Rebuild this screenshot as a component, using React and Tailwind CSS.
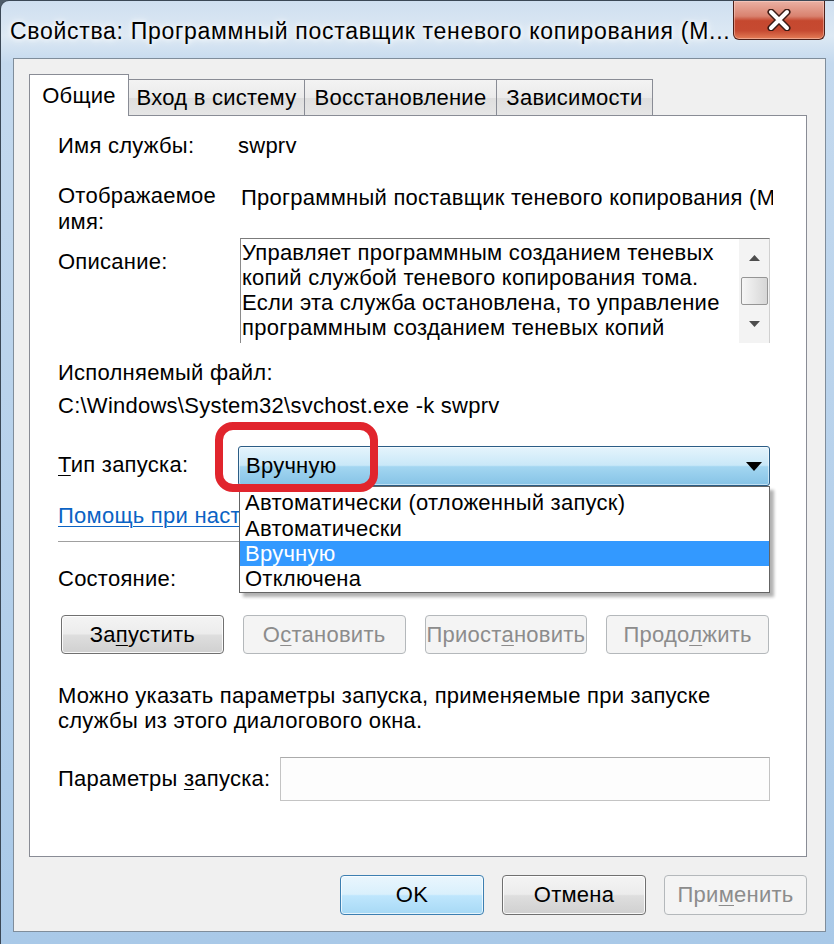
import React from 'react';

// Mnemonic underline (Alt-key letter)
function Mn({ children }) {
  return <span className="underline decoration-1 underline-offset-[3px]">{children}</span>;
}

function WinButton({ children, variant = 'normal', className = '' }) {
  const variants = {
    normal:
      'border-[#707070] bg-[linear-gradient(to_bottom,#f4f4f4_0%,#ececec_48%,#dedede_52%,#d0d0d0_100%)] text-black shadow-[inset_0_0_0_1px_rgba(255,255,255,0.85)]',
    disabled: 'border-[#b4b8bb] bg-[#f4f4f4] text-[#8c8c8c]',
    focused:
      'border-[#3c7fb1] bg-[linear-gradient(to_bottom,#eaf6fd_0%,#d9f0fc_48%,#bee6fd_52%,#a7d9f5_100%)] text-black shadow-[inset_0_0_0_1px_rgba(255,255,255,0.7)]',
  };
  return (
    <div
      className={`flex items-center justify-center rounded-[4px] border leading-[24px] ${variants[variant]} ${className}`}
    >
      <span>{children}</span>
    </div>
  );
}

function Tab({ children, active, width }) {
  if (active) {
    return (
      <div
        className={`${width} relative z-10 -mb-px flex h-[42px] items-start justify-center border border-b-0 border-[#898c95] bg-white pt-[9px] leading-[24px]`}
      >
        {children}
      </div>
    );
  }
  return (
    <div
      className={`${width} flex h-[36px] items-start justify-center border-t border-r border-[#898c95] bg-[linear-gradient(to_bottom,#f3f3f3_0%,#ebebeb_50%,#dedede_51%,#e6e6e6_100%)] pt-[6px] leading-[24px]`}
    >
      {children}
    </div>
  );
}

function CloseButton() {
  return (
    <div className="mr-[9px] ml-auto flex h-[39px] w-[92px] shrink-0 items-center justify-center rounded-b-[6px] border border-t-0 border-[#4e2019] bg-[linear-gradient(to_bottom,#eab1a4_0%,#d9826f_40%,#c5482f_52%,#c64a31_78%,#e47d57_100%)] shadow-[inset_0_0_0_1px_rgba(255,220,210,0.45)]">
      <svg width="24" height="22" viewBox="0 0 24 22">
        <path d="M4 3 L20 19 M20 3 L4 19" stroke="#3a1a14" strokeWidth="7" strokeLinecap="round" />
        <path d="M4 3 L20 19 M20 3 L4 19" stroke="#ffffff" strokeWidth="4" strokeLinecap="round" />
      </svg>
    </div>
  );
}

function ScrollArrow({ down }) {
  return (
    <svg width="11" height="6" viewBox="0 0 11 6">
      <polygon points={down ? '0,0 11,0 5.5,6' : '0,6 11,6 5.5,0'} fill="#4d4d4d" />
    </svg>
  );
}

export default function App() {
  const descLines = [
    'Управляет программным созданием теневых',
    'копий службой теневого копирования тома.',
    'Если эта служба остановлена, то управление',
    'программным созданием теневых копий',
  ];

  const startupTypes = [
    'Автоматически (отложенный запуск)',
    'Автоматически',
    'Вручную',
    'Отключена',
  ];

  return (
    <div className="h-[944px] w-[834px] overflow-hidden bg-[#4f5c69] text-[22px] tracking-[0.25px] text-black [font-family:'Liberation_Sans',Arial,sans-serif]">
      {/* Window frame (Aero glass) */}
      <div className="flex h-full flex-col rounded-tl-[9px] border-t border-l border-[#3b4856] bg-[linear-gradient(to_bottom,#cfdff0_0%,#dde9f4_35px,#c4d9ee_62px,#a9c9e8_100%)]">
        {/* Title bar */}
        <div className="flex h-[57px] shrink-0 items-start">
          <div className="pt-[17px] pl-[9px] text-[23px] leading-[26px] tracking-[0.7px] whitespace-nowrap [text-shadow:0_0_10px_#fff,0_0_5px_#fff]">
            Свойства: Программный поставщик теневого копирования (М...
          </div>
          <CloseButton />
        </div>

        {/* Client area */}
        <div className="mr-[8px] ml-[12px] flex h-[874px] shrink-0 flex-col border border-[#7f8d9b] bg-[#f0f0f0] pt-[15px] pr-[18px] pl-[15px]">
          {/* Tabs */}
          <div className="flex h-[41px] items-end">
            <Tab active width="w-[100px]">Общие</Tab>
            <Tab width="w-[176px]">Вход в систему</Tab>
            <Tab width="w-[192px]">Восстановление</Tab>
            <Tab width="w-[156px]">Зависимости</Tab>
          </div>

          {/* Tab panel */}
          <div className="relative flex h-[742px] flex-col border border-[#898c95] bg-white pr-[36px] pl-[28px] leading-[24px]">
            {/* Service name */}
            <div className="mt-[18px] flex h-[24px]">
              <div className="w-[180px] shrink-0">Имя службы:</div>
              <div>swprv</div>
            </div>

            {/* Display name */}
            <div className="mt-[25px] flex">
              <div className="w-[180px] shrink-0 leading-[26px]">
                Отображаемое
                <br />
                имя:
              </div>
              <div className="w-[535px] shrink-0 overflow-hidden pt-[3px] pl-[3px] whitespace-nowrap">
                Программный поставщик теневого копирования (Microsoft)
              </div>
            </div>

            {/* Description */}
            <div className="mt-[3px] flex h-[105px]">
              <div className="w-[182px] shrink-0 pt-[12px]">Описание:</div>
              <div className="flex flex-1 border-t border-r border-l border-t-[#7b7b7b] border-r-[#d0d0d0] border-l-[#8a8a8a] bg-white">
                <div className="flex-1 overflow-hidden pt-[1px] pl-[1px] leading-[25px] whitespace-nowrap">
                  {descLines.map((line) => (
                    <div key={line}>{line}</div>
                  ))}
                </div>
                <div className="flex w-[30px] shrink-0 flex-col items-center bg-[#f3f3f3]">
                  <div className="flex h-[38px] items-center">
                    <ScrollArrow />
                  </div>
                  <div className="h-[28px] w-[27px] rounded-[2px] border border-[#959595] bg-[linear-gradient(to_right,#f6f6f6_0%,#e6e6e6_50%,#d6d6d6_100%)]" />
                  <div className="flex flex-1 items-center">
                    <ScrollArrow down />
                  </div>
                </div>
              </div>
            </div>

            {/* Executable */}
            <div className="mt-[18px] h-[24px]">Исполняемый файл:</div>
            <div className="mt-[9px] h-[24px] whitespace-nowrap">C:\Windows\System32\svchost.exe -k swprv</div>

            {/* Startup type */}
            <div className="mt-[28px] flex h-[40px]">
              <div className="w-[180px] shrink-0 pt-[7px]">
                <Mn>Т</Mn>ип запуска:
              </div>
              <div className="relative flex-1">
                <div className="flex h-full items-center justify-between rounded-[3px] border border-[#2b5d86] bg-[linear-gradient(to_bottom,#e5f4fc_0%,#c9e8f8_48%,#a3d6f1_52%,#86c3e6_100%)] pr-[7px] pl-[7px] shadow-[inset_0_0_0_1px_rgba(255,255,255,0.5)]">
                  <span>Вручную</span>
                  <svg width="16" height="9" viewBox="0 0 16 9">
                    <polygon points="0,0 16,0 8,9" fill="#000" />
                  </svg>
                </div>

                {/* Open dropdown list */}
                <div className="absolute top-full right-0 left-[1px] z-10 h-[107px] overflow-hidden border border-[#646464] bg-white shadow-[4px_4px_3px_rgba(0,0,0,0.3)]">
                  {startupTypes.map((item, i) => (
                    <div
                      key={item}
                      className={`flex items-center pl-[5px] whitespace-nowrap ${
                        i === 0 ? 'h-[29px] pt-[3px]' : 'h-[25px]'
                      } ${item === 'Вручную' ? 'bg-[#3399ff] text-white' : ''}`}
                    >
                      {item}
                    </div>
                  ))}
                </div>

                {/* Red annotation ring */}
                <div className="pointer-events-none absolute top-[-24px] left-[-23px] z-20 h-[70px] w-[163px] rounded-[18px] border-[8px] border-[#e1252d]" />
              </div>
            </div>

            {/* Help link */}
            <div className="mt-[18px] h-[24px] whitespace-nowrap text-[#0b63c4] underline decoration-1 underline-offset-[3px]">
              Помощь при настройке параметров запуска службы.
            </div>

            <div className="mt-[13px] h-px bg-[#a0a0a0]" />

            {/* Status */}
            <div className="mt-[25px] h-[24px]">Состояние:</div>

            <div className="mt-[24px] grid h-[39px] grid-cols-4 gap-[19px] pr-[1px] pl-[3px]">
              <WinButton variant="normal">
                За<Mn>п</Mn>устить
              </WinButton>
              <WinButton variant="disabled">
                О<Mn>с</Mn>тановить
              </WinButton>
              <WinButton variant="disabled">
                Приост<Mn>а</Mn>новить
              </WinButton>
              <WinButton variant="disabled">
                Продо<Mn>л</Mn>жить
              </WinButton>
            </div>

            <div className="mt-[29px] leading-[25px]">
              Можно указать параметры запуска, применяемые при запуске
              <br />
              службы из этого диалогового окна.
            </div>

            <div className="mt-[24px] flex h-[44px]">
              <div className="flex w-[222px] shrink-0 items-center">
                <span>
                  Параметры <Mn>з</Mn>апуска:
                </span>
              </div>
              <div className="flex-1 border border-[#c4c4c4] border-t-[#ababab] bg-[#fdfdfd]" />
            </div>
          </div>

          {/* Dialog buttons */}
          <div className="mt-[18px] flex h-[40px] justify-end gap-[18px]">
            <WinButton variant="focused" className="w-[144px]">OK</WinButton>
            <WinButton variant="normal" className="w-[144px]">Отмена</WinButton>
            <WinButton variant="disabled" className="w-[143px]">
              При<Mn>м</Mn>енить
            </WinButton>
          </div>
        </div>
      </div>
    </div>
  );
}
